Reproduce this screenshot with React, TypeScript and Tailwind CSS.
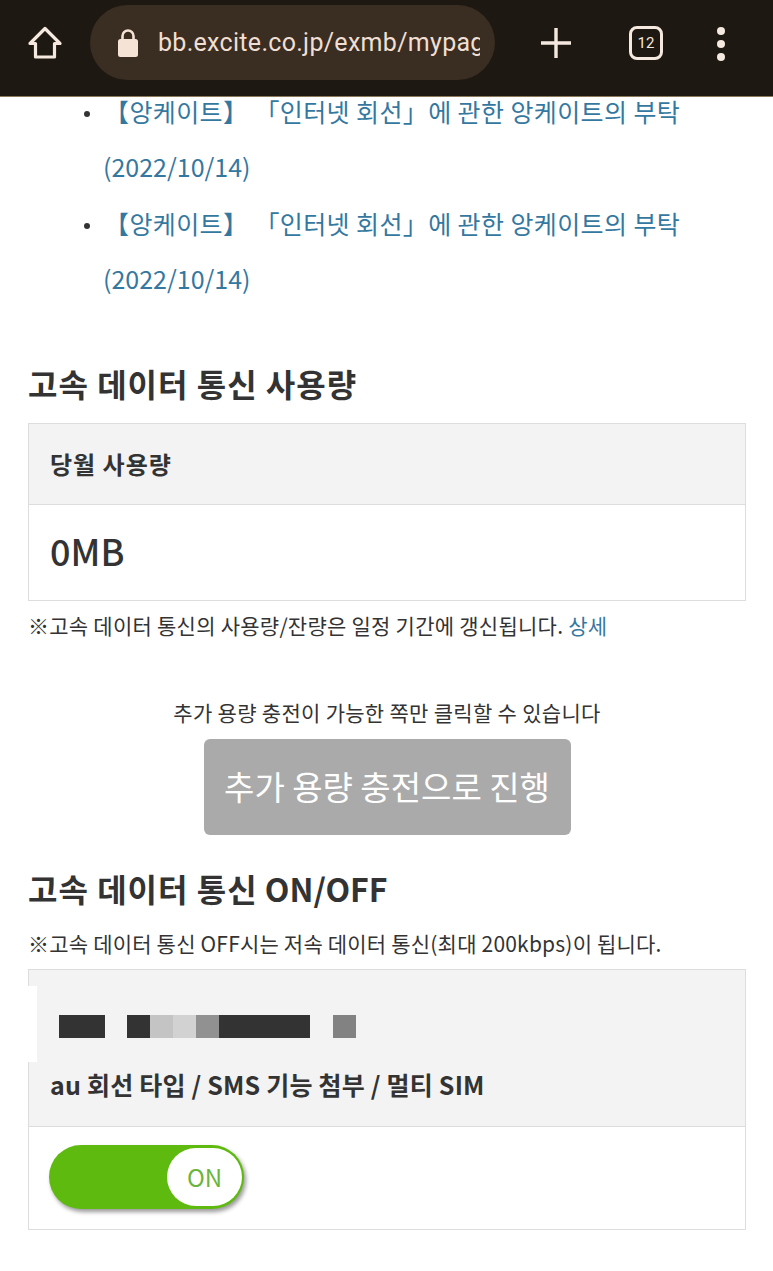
const font = { fontFamily: '"Noto Sans CJK KR", "Noto Sans", sans-serif' }

const NEWS = [1, 2]

function HomeIcon() {
  return (
    <svg width="36" height="36" viewBox="0 0 36 36" fill="none" stroke="#f5e9df" strokeWidth="3.2" strokeLinejoin="round" strokeLinecap="round">
      <path d="M3 18.5 18 3.5l15 15h-5.5V32h-19V18.5z" />
    </svg>
  )
}

function LockIcon() {
  return (
    <svg width="22" height="30" viewBox="0 0 22 30">
      <path d="M5.5 12V8a5.5 5.5 0 0 1 11 0v4" fill="none" stroke="#f5e3d6" strokeWidth="2.6" />
      <rect x="1" y="11" width="20" height="18" rx="2.5" fill="#f5e3d6" />
    </svg>
  )
}

function BrowserBar() {
  return (
    <header className="relative z-10 flex h-[97px] items-start bg-[#1e1812] border-b border-[#8a7a5a]">
      <div className="ml-[27px] mt-[25px] w-[36px] h-[36px]">
        <HomeIcon />
      </div>
      <div className="ml-[27px] mt-[5px] flex h-[75px] w-[405px] items-center overflow-hidden rounded-full bg-[#3a2d22] pl-[27px]">
        <LockIcon />
        <span
          className="ml-[19px] w-[322px] overflow-hidden whitespace-nowrap text-[25px] tracking-[0.3px] text-[#f0dfd2]"
          style={{ fontFamily: '"Roboto", sans-serif' }}
        >
          bb.excite.co.jp/exmb/mypage
        </span>
      </div>
      <div className="ml-[45px] mt-[27px] h-[32px] w-[32px]">
        <svg width="32" height="32" viewBox="0 0 32 32" stroke="#f5e9df" strokeWidth="3.4">
          <path d="M16 1v30M1 16h30" />
        </svg>
      </div>
      <div
        className="ml-[57px] mt-[26px] flex h-[34px] w-[34px] items-center justify-center rounded-[8px] border-[3px] border-[#f5e9df] text-[15px] text-[#f5e9df]"
        style={{ fontFamily: '"Roboto", sans-serif' }}
      >
        12
      </div>
      <div className="ml-[54px] mt-[27px] flex flex-col gap-[5px]">
        <span className="h-[8px] w-[8px] rounded-full bg-[#f5e9df]" />
        <span className="h-[8px] w-[8px] rounded-full bg-[#f5e9df]" />
        <span className="h-[8px] w-[8px] rounded-full bg-[#f5e9df]" />
      </div>
    </header>
  )
}

export default function App() {
  return (
    <div className="min-h-[1271px] w-[773px] overflow-hidden bg-white text-[#333333]" style={font}>
      <BrowserBar />

      <main className="-mt-[14px] pl-[28px] pr-[27px]">
        {/* News list */}
        <ul className="pl-[76px] text-[25px] leading-[56px] text-[#35789f]">
          {NEWS.map((n) => (
            <li key={n} className="relative">
              <span className="absolute -left-[20px] top-[28px] h-[6px] w-[6px] rounded-full bg-[#333333]" />
              <span className="block whitespace-nowrap tracking-[0.4px]">【앙케이트】 「인터넷 회선」에 관한 앙케이트의 부탁</span>
              <span className="-ml-[1px] -mt-[1px] mb-[1px] block">(2022/10/14)</span>
            </li>
          ))}
        </ul>

        {/* Usage */}
        <h2 className="mt-[55px] text-[32px] font-semibold leading-[44px] tracking-[1px]">고속 데이터 통신 사용량</h2>
        <div className="mt-[18px] border border-[#dddddd]">
          <div className="flex h-[81px] items-center border-b border-[#dddddd] bg-[#f3f3f3] px-[21px] text-[24px] font-semibold tracking-[1px]">
            당월 사용량
          </div>
          <div className="flex h-[95px] items-center px-[21px] pb-[5px] text-[36px] font-medium">0MB</div>
        </div>
        <p className="mt-[9px] text-[21px] leading-[30px] tracking-[0.25px]">
          ※고속 데이터 통신의 사용량/잔량은 일정 기간에 갱신됩니다. <span className="text-[#35789f]">상세</span>
        </p>

        {/* Charge */}
        <p className="mt-[57px] text-center text-[21px] leading-[30px] tracking-[0.3px]">추가 용량 충전이 가능한 쪽만 클릭할 수 있습니다</p>
        <div className="mt-[12px] flex justify-center">
          <button className="h-[96px] w-[367px] rounded-[6px] bg-[#aaaaaa] text-[33px] text-white">
            추가 용량 충전으로 진행
          </button>
        </div>

        {/* ON/OFF */}
        <h2 className="mt-[31px] text-[32px] font-semibold leading-[44px]">
          <span className="tracking-[1px]">고속 데이터 통신</span> ON/OFF
        </h2>
        <p className="mt-[18px] whitespace-nowrap text-[21px] leading-[30px] tracking-[0.2px]">※고속 데이터 통신 OFF시는 저속 데이터 통신(최대 200kbps)이 됩니다.</p>
        <div className="mt-[11px] border border-[#dddddd]">
          <div className="relative h-[157px] border-b border-[#dddddd] bg-[#f3f3f3]">
            <span className="absolute -left-[1px] top-[16px] h-[76px] w-[9px] bg-white" />
            <div className="flex h-[96px] items-center pt-[16px]">
              <div className="ml-[30px] flex h-[23px]">
                <span className="w-[46px] bg-[#333333]" />
                <span className="ml-[22px] w-[23px] bg-[#333333]" />
                <span className="w-[23px] bg-[#c4c4c4]" />
                <span className="w-[23px] bg-[#d2d2d2]" />
                <span className="w-[23px] bg-[#919191]" />
                <span className="w-[91px] bg-[#333333]" />
                <span className="ml-[23px] w-[23px] bg-[#828282]" />
              </div>
            </div>
            <p className="px-[21px] text-[25px] font-semibold leading-[36px] tracking-[0.2px]">au 회선 타입 / SMS 기능 첨부 / 멀티 SIM</p>
          </div>
          <div className="flex h-[102px] items-start px-[20px] pt-[18px]">
            <div className="flex h-[64px] w-[195px] items-center justify-end rounded-full bg-[#5fba10] pr-[2px] shadow-[2px_3px_4px_rgba(0,0,0,0.4)]">
              <span className="flex h-[58px] w-[75px] items-center justify-center rounded-full bg-white text-[24px] text-[#6ab53c]">
                ON
              </span>
            </div>
          </div>
        </div>
      </main>
    </div>
  )
}
